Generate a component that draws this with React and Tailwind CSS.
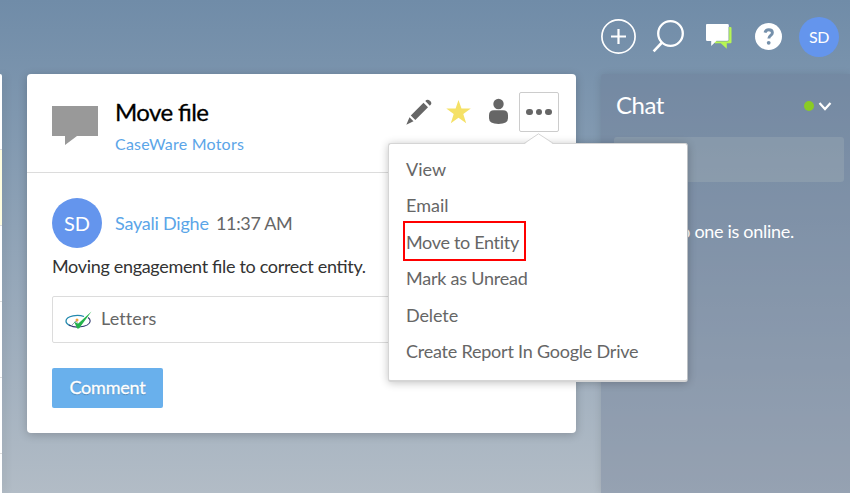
const menuItems = [
  { label: 'View', tracking: 'tracking-normal' },
  { label: 'Email', tracking: 'tracking-normal' },
  { label: 'Move to Entity', tracking: 'tracking-[-0.32px]' },
  { label: 'Mark as Unread', tracking: 'tracking-[-0.22px]' },
  { label: 'Delete', tracking: 'tracking-[-0.1px]' },
  { label: 'Create Report In Google Drive', tracking: 'tracking-[-0.22px]' },
];

function TopBar() {
  return (
    <header className="flex h-[74px] items-start justify-end pr-[11px] pt-[17px]">
      <svg className="mt-px h-[37px] w-[37px]" viewBox="0 0 37 37" fill="none" stroke="#fff">
        <circle cx="18.5" cy="18.5" r="16.6" strokeWidth="1.7" />
        <path d="M18.5 11v15M11 18.5h15" strokeWidth="2.2" />
      </svg>
      <svg className="ml-[15px] mt-[2px] h-[36px] w-[34px]" viewBox="0 0 34 36" fill="none" stroke="#fff">
        <circle cx="18.5" cy="14.5" r="12.3" strokeWidth="2.3" />
        <path d="M10 23.5L1.6 32.3" strokeWidth="2.6" />
      </svg>
      <svg className="ml-[19px] mt-[6px] h-[28px] w-[27px]" viewBox="0 0 27 28">
        <path d="M3 4h22.500q1 0 1 1v14.300q0 1-1 1h-3.700v5.500l-6-5.500H10z" fill="#b7f653" />
        <path d="M2 1h20.500q1.300 0 1.300 1.300v14.200q0 1.500-1.500 1.500H11.300L6.200 23V18H2.300Q1 18 1 16.700V2q0-1 1-1z" fill="#fff" />
        <path d="M23.800 4v12.500q0 1.700-1.700 1.700H11.300" fill="none" stroke="#7590ab" strokeWidth=".6" />
      </svg>
      <svg className="ml-[22px] mt-[5px] h-[29px] w-[29px]" viewBox="0 0 29 29">
        <circle cx="14.500" cy="14.500" r="13.500" fill="#fff" />
        <path d="M11 10.700c.5-2 1.700-2.900 3.700-2.900 2.300 0 3.700 1.200 3.700 3 0 2.600-3.600 2.700-3.600 5.800" fill="none" stroke="#7590ab" strokeWidth="2.900" />
        <circle cx="14.700" cy="20.800" r="1.900" fill="#7590ab" />
      </svg>
      <div className="ml-[16px] flex h-[40px] w-[40px] items-center justify-center rounded-full bg-[#6495ed] text-[16px] tracking-[-0.3px] text-white">SD</div>
    </header>
  );
}

function Menu() {
  return (
    <div className="absolute left-[361px] top-[69px] z-10 h-[239px] w-[300px] rounded-[3px] border border-[#d5d5d5] border-b-2 border-r-[#bcc0c4] bg-white pt-[7px] shadow-[0_1px_8px_rgba(0,0,0,0.24)]">
      <svg className="absolute -top-[11px] left-[134px] h-[12px] w-[32px]" viewBox="0 0 32 12">
        <path d="M1 11.500L15.500 1 30.500 11.500V12H1z" fill="#fff" />
        <path d="M1 10.500L15.500 .8 30.500 10.500" fill="none" stroke="#d5d5d5" />
      </svg>
      <ul>
        {menuItems.map(({ label, tracking }) => (
          <li key={label} className={`flex h-[36.500px] items-center pl-[17px] text-[18px] text-[#666] ${tracking}`}>{label}</li>
        ))}
      </ul>
      <div className="absolute left-[14px] top-[77px] h-[40px] w-[123px] border-2 border-[#f00]" />
    </div>
  );
}

function CardHeader() {
  return (
    <div className="flex h-[99px] items-start border-b border-[#dcdcdc] pl-[25px]">
      <svg className="mt-[32px] h-[40px] w-[46px]" viewBox="0 0 46 40">
        <path d="M0 0h46v30H25l-12 9v-9H0z" fill="#999" />
      </svg>
      <div className="ml-[17px] mt-[22px] w-[291px]">
        <h1 className="text-[24px] leading-[32px] tracking-[-0.6px] text-black [-webkit-text-stroke:0.3px_#000] [font-feature-settings:'liga'_1]">Move file</h1>
        <a className="mt-[5px] block text-[16px] leading-[22px] tracking-[0.22px] text-[#5ba5e8]">CaseWare Motors</a>
      </div>
      <svg className="mt-[24px] h-[28px] w-[28px]" viewBox="0 0 28 28" fill="#666">
        <path d="M.3 26.800l3.200-7.500 4 4zM4.800 17.500L17.500 4.800l4.500 4.500L9.300 22zM19.300 3q1.500-2 3.500-1 2.200 1 2.600 2.900.2 1.300-1.600 2.800z" />
      </svg>
      <svg className="ml-[12px] mt-[25px] h-[26px] w-[26px]" viewBox="0 0 26 26">
        <path d="M12.500 1l3 8.600h9.300l-7.500 5.500 2.900 9.200-7.700-5.500-7.700 5.500 2.900-9.200L.3 9.600h9.300z" fill="#f5e166" />
      </svg>
      <svg className="ml-[17px] mt-[24px] h-[27px] w-[20px]" viewBox="0 0 20 27" fill="#666">
        <circle cx="9.500" cy="6" r="5.200" />
        <path d="M5 12.300h9q5 0 5 5v3q0 5.700-9.500 5.700T0 20.300v-3q0-5 5-5z" />
      </svg>
      <div className="ml-[10px] mt-[18px] flex h-[40px] w-[40px] items-center justify-center gap-[3px] rounded-[2px] border border-[#ccc] bg-white">
        <i className="h-[6.500px] w-[6.500px] rounded-full bg-[#666]" />
        <i className="h-[6.500px] w-[6.500px] rounded-full bg-[#666]" />
        <i className="h-[6.500px] w-[6.500px] rounded-full bg-[#666]" />
      </div>
    </div>
  );
}

function Card() {
  return (
    <main className="relative ml-[25px] h-[359px] w-[549px] shrink-0 rounded-[4px] bg-white shadow-[0_2px_10px_rgba(0,0,0,0.2)]">
      <CardHeader />
      <div className="px-[25px] pt-[25px]">
        <div className="flex items-center text-[18px]">
          <div className="flex h-[50px] w-[50px] items-center justify-center rounded-full bg-[#6495ed] text-[20px] text-white">SD</div>
          <span className="ml-[13px] w-[94px] whitespace-nowrap tracking-[-0.22px] text-[#5ba5e8]">Sayali Dighe</span>
          <span className="ml-[7px] tracking-[-0.35px] text-[#666]">11:37 AM</span>
        </div>
        <p className="mt-[4px] text-[18px] leading-[28px] tracking-[-0.32px] text-[#333] [font-feature-settings:'liga'_1]">Moving engagement file to correct entity.</p>
        <div className="mt-[16px] flex h-[47px] items-center rounded-[2px] border border-[#dcdcdc] pl-[12px] text-[18px] text-[#666]">
          <svg className="h-[18px] w-[28px]" viewBox="0 0 28 18" fill="none">
            <path d="M19 5.500Q14 3.600 8 4.800 1 6.300 1 10q0 3 4.500 4.800" stroke="#2389ae" strokeWidth="1.300" />
            <path d="M4 14q5 2.600 10 2 11-1 11.200-6 0-2-2.200-3.500" stroke="#353b73" strokeWidth="1.100" />
            <path d="M7 14l4-4 3 4" stroke="#8a87a8" strokeWidth=".8" />
            <circle cx="12" cy="9" r="1.500" fill="#eba33c" />
            <path d="M9 10.500l4 2.200L26.500.5 14 17.500h-1.800z" fill="#24b34b" />
          </svg>
          <span className="-mt-[2px] ml-[8px] tracking-[0.1px]">Letters</span>
        </div>
        <button className="mt-[25px] flex h-[40px] w-[111px] items-center justify-center rounded-[2px] bg-[#69b0ec] pb-px text-[18px] tracking-[-0.2px] text-white [-webkit-text-stroke:0.3px_#fff] [text-shadow:0_1px_1px_rgba(0,0,0,0.25)]">Comment</button>
      </div>
      <Menu />
    </main>
  );
}

function Chat() {
  return (
    <aside className="ml-[25px] h-[419px] grow rounded-tl-[3px] bg-[rgba(108,122,148,0.4)] text-white shadow-[0_1px_8px_rgba(0,0,0,0.12)]">
      <div className="flex h-[63px] items-center pl-[15px] pr-[18px]">
        <h2 className="-mt-[2px] grow text-[24px] tracking-[-0.5px]">Chat</h2>
        <i className="h-[10px] w-[10px] rounded-full bg-[#8acb25]" />
        <svg className="ml-[4px] h-[10px] w-[14px]" viewBox="0 0 14 10" fill="none" stroke="#fff" strokeWidth="2.200">
          <path d="M1.500 2l5.500 6 5.500-6" />
        </svg>
      </div>
      <div className="ml-[13px] h-[45px] w-[230px] rounded-[3px] bg-[rgba(180,190,190,0.25)]" />
      <p className="mt-[36px] pl-[66px] text-[18px] leading-[26px] tracking-[-0.3px]">No one is online.</p>
    </aside>
  );
}

export default function App() {
  return (
    <div className="h-[493px] w-[850px] overflow-hidden bg-linear-to-b from-[#708ca8] to-[#b2bcc6] font-['Lato',sans-serif]">
      <TopBar />
      <div className="flex items-start">
        <div className="flex h-[419px] w-[2px] shrink-0 flex-col rounded-tr-[2px] bg-white shadow-[2px_0_8px_rgba(0,0,0,0.2)]">
          <div className="mt-[75px] h-[77px] shrink-0 border-y border-[#ddd] bg-[#fffde0]" />
          <div className="h-[76px] shrink-0 border-b border-[#ddd]" />
          <div className="h-[76px] shrink-0 border-b border-[#ddd]" />
          <div className="h-[76px] shrink-0 border-b border-[#ddd]" />
        </div>
        <Card />
        <Chat />
      </div>
    </div>
  );
}
